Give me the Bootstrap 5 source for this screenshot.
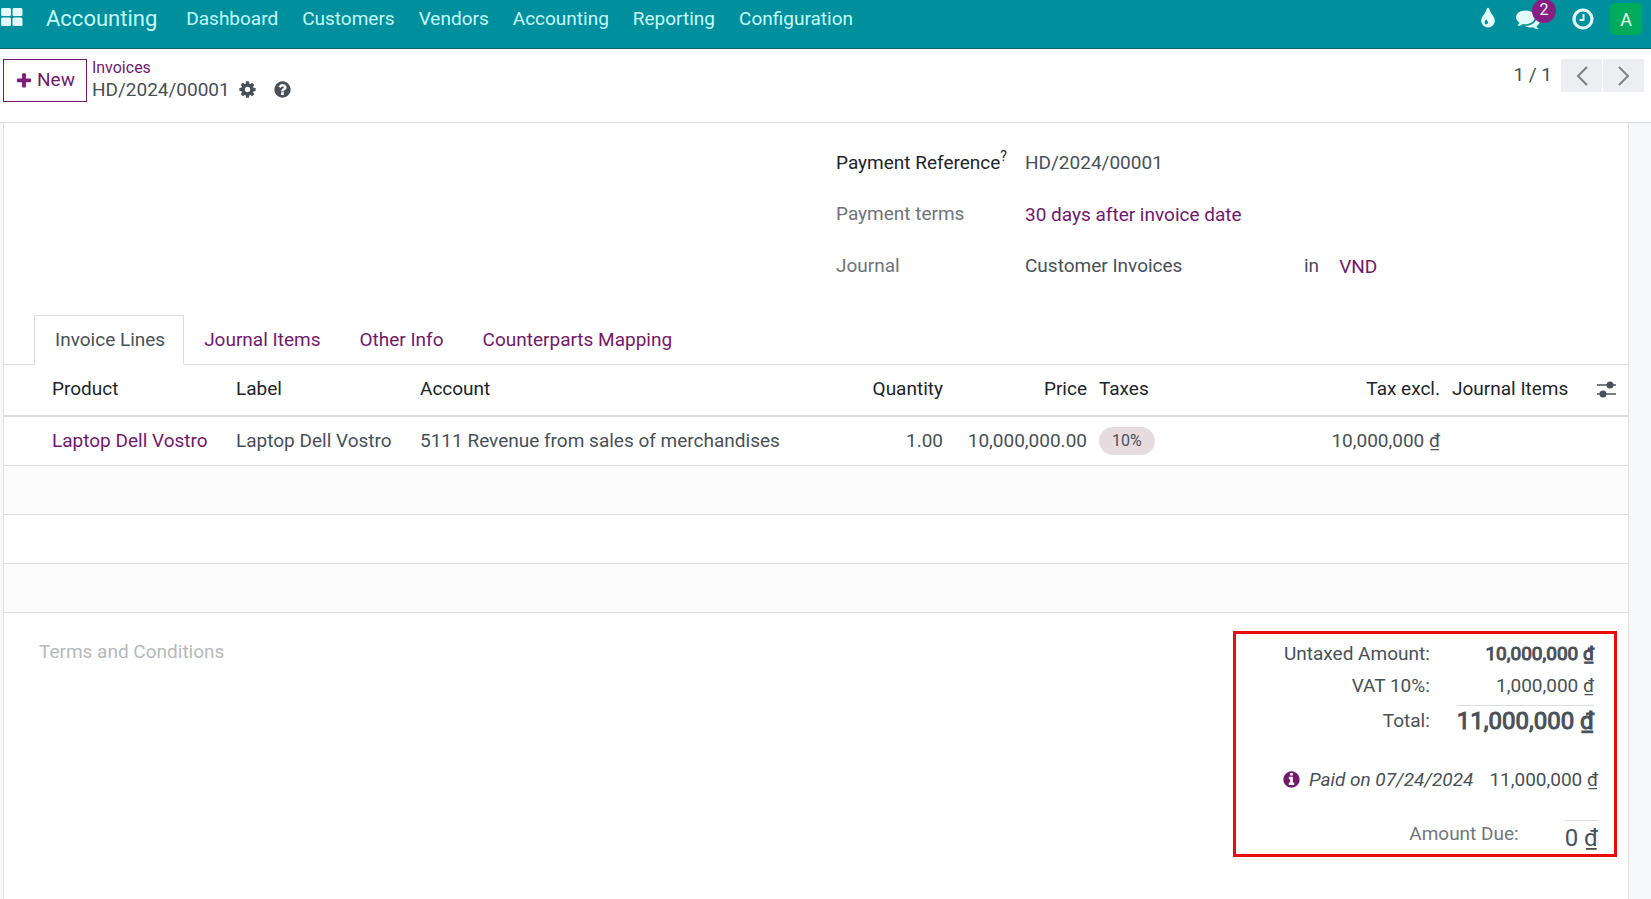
<!DOCTYPE html>
<html lang="en">
<head>
<meta charset="utf-8">
<meta name="viewport" content="width=device-width, initial-scale=1">
<title>HD/2024/00001 - Accounting</title>
<link rel="stylesheet" href="https://cdn.jsdelivr.net/npm/bootstrap@5.3.0/dist/css/bootstrap.min.css">
<style>
  :root { --ink: #495057; --heading: #212529; --accent: #71196b; --line: #dadde1; --teal: #00909d; }
  body { font-family: Roboto, sans-serif; font-size: 19px; line-height: 28px; color: var(--ink); background: #fff; }
  a { color: var(--accent); text-decoration: none; }
  svg { display: block; fill: currentColor; }

  .topbar { height: 49px; background: var(--teal); border-bottom: 1px solid #13616a; padding-right: 9px; }
  .topbar a, .topbar button { color: #c5fbfb; }
  .topbar svg { color: #e3fbfc; }
  .topbar .menu a { padding: 0 12px; line-height: 38px; }
  .topbar .app-title { font-size: 22px; line-height: 38px; padding: 0 17px 0 23px; }
  .tray { height: 38px; }
  .bare { border: 0; background: none; padding: 0; color: var(--ink); }
  .count { position: absolute; left: 16px; top: -8px; width: 24px; height: 24px; border-radius: 12px; background: #871e81; color: #e8f8fb; font-size: 16px; line-height: 22px; text-align: center; }
  .topbar .avatar { width: 32px; height: 32px; border-radius: 5px; background: #00ab5b; color: #e5fff2; font-size: 18px; line-height: 34px; }

  .control-panel { min-height: 73px; padding: 10px 7px 0 3px; }
  .btn-new { --bs-btn-color: var(--accent); --bs-btn-border-color: var(--accent); --bs-btn-border-radius: 0; --bs-btn-font-size: 19px; --bs-btn-padding-x: 11px; --bs-btn-padding-y: 6px; height: 43px; gap: 4px; }
  .btn-new svg { color: #801c7a; }
  .crumbs { line-height: 22px; margin-left: 5px; }
  .crumbs .parent { font-size: 16px; line-height: 18px; padding-bottom: 2px; }
  .crumbs button { padding-bottom: 2px; }
  .pager { gap: 1px; line-height: 31px; }
  .pager button { width: 41px; height: 33px; border: 0; background: #eceef1; color: #7d8287; display: grid; place-items: center; padding: 0; }

  .canvas { background: #f7f8fa; border-top: 1px solid var(--line); padding: 0 22px 0 3px; min-height: calc(100vh - 122px); }
  .sheet { background: #fff; border: solid var(--line); border-width: 0 1px; min-height: calc(100vh - 123px); }
  .fields { padding: 26px 20px 0; display: grid; grid-template-columns: 189px 1fr; row-gap: 23px; }
  .fields a { padding-top: 1px; }
  .fields label { color: #6f7479; }
  .fields label.strong-label { color: var(--heading); }
  .fields sup { font-size: 14px; top: -8px; }
  .journal-name { width: 279px; }

  .nav-tabs { --bs-nav-tabs-border-color: var(--line); --bs-nav-tabs-border-radius: 0; --bs-nav-tabs-link-active-color: var(--ink); --bs-nav-link-color: var(--accent); --bs-nav-tabs-link-active-border-color: var(--line) var(--line) #fff; padding-left: 30px; margin-top: 34px; }
  .nav-tabs .nav-link { padding: 10px 18px 10px 20px; line-height: 28px; margin-right: -1px; }

  .lines { table-layout: fixed; margin: 0; --bs-table-color: var(--ink); --bs-table-bg: transparent; border-color: var(--line); }
  .lines th, .lines td { padding: 9px 6px; line-height: 28px; height: 49px; white-space: nowrap; vertical-align: middle; }
  .lines th { font-weight: 400; color: var(--heading); height: 51px; padding-bottom: 11px; border-bottom-width: 2px; }
  .lines th:first-child, .lines td:first-child { padding-left: 48px; }
  .lines .filler td { background: #fcfcfc; }
  .lines th button { display: block; margin-left: 14px; }
  .tax-tag { display: inline-block; vertical-align: top; border-radius: 14px; background: #e6dcdf; font-size: 16px; line-height: 28px; padding: 0 13px; }

  .sheet-foot { padding: 18px 11px 0 35px; }
  .terms { border: 0; background: none; padding: 7px 0; resize: none; color: var(--ink); line-height: 28px; }
  .terms::placeholder { color: #b6b9bc; opacity: 1; }
  .totals { border: 3px solid #ea0b0b; width: 384px; height: 226px; padding: 4px 16px 0; white-space: nowrap; }
  .sums { display: grid; grid-template-columns: 1fr auto; column-gap: 27px; text-align: right; line-height: 32px; padding-right: 4px; }
  .heavy { -webkit-text-stroke: 1px currentColor; }
  .grand { font-size: 24px; line-height: 30px; border-top: 1px solid var(--line); margin-top: 3px; }
  .grand-label { margin-top: 3px; }
  .paid { margin-top: 27px; line-height: 32px; }
  .due { margin-top: 24px; gap: 46px; }
  .due .due-label { color: #73777b; }
  .due .due-value { font-size: 24px; line-height: 34px; border-top: 1px solid var(--line); }
</style>
</head>
<body>
<header class="topbar d-flex align-items-start">
  <a href="#" aria-label="Apps" class="mt-2"><svg width="23" height="18" viewBox="0 0 23 18"><rect x="1" y="0" width="10" height="8" rx="1.5"/><rect x="12.500" y="0" width="10" height="8" rx="1.500"/><rect x="1" y="9.500" width="10" height="8.500" rx="1.500"/><rect x="12.500" y="9.500" width="10" height="8.500" rx="1.500"/></svg></a>
  <a href="#" class="app-title">Accounting</a>
  <nav class="menu d-flex">
    <a href="#">Dashboard</a><a href="#">Customers</a><a href="#">Vendors</a><a href="#">Accounting</a><a href="#">Reporting</a><a href="#">Configuration</a>
  </nav>
  <div class="tray ms-auto d-flex align-items-center">
    <button class="bare me-3" aria-label="Theme"><svg width="24" height="24" viewBox="0 0 1792 1792"><path d="M896 1152q0-36-20-69-1-1-15.500-22.500t-25.500-38-25-44-21-50.500q-4-16-21-16t-21 16q-7 23-21 50.500t-25 44-25.500 38-15.500 22.500q-20 33-20 69 0 53 37.500 90.500t90.500 37.500 90.500-37.500 37.500-90.500zm512-128q0 212-150 362t-362 150-362-150-150-362q0-145 81-275 6-9 62.500-90.500t101-151 99.500-178 83-201.500q9-30 34-47t51-17 51.500 17 33.500 47q28 93 83 201.500t99.500 178 101 151 62.500 90.500q81 127 81 275z"/></svg></button>
    <button class="bare position-relative" aria-label="Messages"><svg width="24" height="24" viewBox="0 0 1792 1792"><path d="M1408 768q0 139-94 257t-256.500 186.500-353.500 68.500q-86 0-176-16-124 88-278 128-36 9-86 16h-3q-11 0-20.500-8t-11.500-21q-1-3-1-6.500t.5-6.500 2-6l2.500-5 3.500-5.500 4-5 4.500-5 4-4.500q5-6 23-25t26-29.500 22.500-29 25-38.500 20.500-44q-124-72-195-177t-71-224q0-139 94-257t256.500-186.500 353.500-68.500 353.500 68.500 256.500 186.500 94 257zm384 256q0 120-71 224.500t-195 176.500q10 24 20.500 44t25 38.500 22.500 29 26 29.500 23 25q1 1 4 4.500t4.500 5 4 5 3.500 5.500l2.500 5 2 6 .5 6.500-1 6.500q-3 14-13 22t-22 7q-50-7-86-16-154-40-278-128-90 16-176 16-271 0-472-132 58 4 88 4 161 0 309-45t264-129q125-92 192-212t67-254q0-77-23-152 129 71 204 178t75 230z"/></svg><span class="count">2</span></button>
    <button class="bare ms-4 ps-2 me-3" aria-label="Activities"><svg width="22" height="22" viewBox="0 0 22 22"><circle cx="11" cy="11" r="9" fill="none" stroke="currentColor" stroke-width="3.200"/><path d="M11.500 6v6H7.500" fill="none" stroke="currentColor" stroke-width="2"/></svg></button>
    <button class="bare avatar" aria-label="User menu">A</button>
  </div>
</header>

<div class="control-panel d-flex align-items-start">
  <button class="btn btn-new d-flex align-items-center"><svg width="18" height="18" viewBox="0 0 1792 1792"><path d="M1600 736v192q0 40-28 68t-68 28h-416v416q0 40-28 68t-68 28h-192q-40 0-68-28t-28-68v-416h-416q-40 0-68-28t-28-68v-192q0-40 28-68t68-28h416v-416q0-40 28-68t68-28h192q40 0 68 28t28 68v416h416q40 0 68 28t28 68z"/></svg>New</button>
  <div class="crumbs">
    <div class="parent"><a href="#">Invoices</a></div>
    <div class="d-flex align-items-center">
      <span>HD/2024/00001</span>
      <button class="bare ms-2" aria-label="Actions"><svg width="19" height="19" viewBox="0 0 1792 1792"><path d="M1152 896q0-106-75-181t-181-75-181 75-75 181 75 181 181 75 181-75 75-181zm512-109v222q0 12-8 23t-20 13l-185 28q-19 54-39 91 35 50 107 138 10 12 10 25t-9 23q-27 37-99 108t-94 71q-12 0-26-9l-138-108q-44 23-91 38-16 136-29 186-7 28-36 28h-222q-14 0-24.500-8.500t-11.500-21.500l-28-184q-49-16-90-37l-141 107q-10 9-25 9-14 0-25-11-126-114-165-168-7-10-7-23 0-12 8-23 15-21 51-66.500t54-70.500q-27-50-41-99l-183-27q-13-2-21-12.500t-8-23.500v-222q0-12 8-23t19-13l186-28q14-46 39-92-40-57-107-138-10-12-10-24 0-10 9-23 26-36 98.500-107.500t94.500-71.500q13 0 26 10l138 107q44-23 91-38 16-136 29-186 7-28 36-28h222q14 0 24.500 8.500t11.500 21.500l28 184q49 16 90 37l142-107q9-9 24-9 13 0 25 10 129 119 165 170 7 8 7 22 0 12-8 23-15 21-51 66.500t-54 70.500q26 50 41 98l183 28q13 2 21 12.500t8 23.500z"/></svg></button>
      <button class="bare ms-3" aria-label="Help"><svg width="19" height="19" viewBox="0 0 1792 1792"><path d="M1024 1376v-192q0-14-9-23t-23-9h-192q-14 0-23 9t-9 23v192q0 14 9 23t23 9h192q14 0 23-9t9-23zm256-672q0-88-55.500-163t-138.500-116-170-41q-243 0-371 213-15 24 8 42l132 100q7 6 19 6 16 0 25-12 53-68 86-92 34-24 86-24 48 0 85.500 26t37.500 59q0 38-20 61t-68 45q-63 28-115.500 86.500t-52.500 125.500v36q0 14 9 23t23 9h192q14 0 23-9t9-23q0-19 21.500-49.500t54.500-49.500q32-18 49-28.500t46-35 44.500-48 28-60.500 12.500-81zm384 192q0 209-103 385.500t-279.500 279.500-385.500 103-385.500-103-279.500-279.500-103-385.500 103-385.500 279.500-279.500 385.500-103 385.500 103 279.500 279.500 103 385.500z"/></svg></button>
    </div>
  </div>
  <div class="pager ms-auto d-flex align-items-start">
    <span class="me-2">1 / 1</span>
    <button aria-label="Previous"><svg width="12" height="20" viewBox="0 0 12 20"><path d="M11 1 2 10l9 9" fill="none" stroke="currentColor" stroke-width="2"/></svg></button>
    <button aria-label="Next"><svg width="12" height="20" viewBox="0 0 12 20"><path d="m1 1 9 9-9 9" fill="none" stroke="currentColor" stroke-width="2"/></svg></button>
  </div>
</div>

<main class="canvas">
  <div class="sheet">
    <div class="row g-0">
      <div class="col-6 offset-6">
        <div class="fields">
          <label class="strong-label">Payment Reference<sup>?</sup></label><span>HD/2024/00001</span>
          <label>Payment terms</label><a href="#">30 days after invoice date</a>
          <label>Journal</label><div class="d-flex"><span class="journal-name">Customer Invoices</span><span>in</span><a href="#" class="ms-3 ps-1">VND</a></div>
        </div>
      </div>
    </div>

    <ul class="nav nav-tabs">
      <li class="nav-item"><a class="nav-link active" href="#">Invoice Lines</a></li>
      <li class="nav-item"><a class="nav-link" href="#">Journal Items</a></li>
      <li class="nav-item"><a class="nav-link" href="#">Other Info</a></li>
      <li class="nav-item"><a class="nav-link" href="#">Counterparts Mapping</a></li>
    </ul>

    <table class="table lines">
      <colgroup><col style="width:226px"><col style="width:184px"><col><col style="width:100px"><col style="width:144px"><col style="width:201px"><col style="width:152px"><col style="width:131px"><col style="width:51px"></colgroup>
      <thead>
        <tr><th>Product</th><th>Label</th><th>Account</th><th class="text-end">Quantity</th><th class="text-end">Price</th><th>Taxes</th><th class="text-end">Tax excl.</th><th>Journal Items</th>
          <th><button class="bare" aria-label="Optional columns"><svg width="19" height="17" viewBox="0 0 19 17"><path d="M0 4h19M0 13h19" stroke="currentColor" stroke-width="1.600"/><circle cx="13" cy="4" r="3.500"/><circle cx="6" cy="13" r="3.500"/></svg></button></th></tr>
      </thead>
      <tbody>
        <tr><td><a href="#">Laptop Dell Vostro</a></td><td>Laptop Dell Vostro</td><td>5111 Revenue from sales of merchandises</td><td class="text-end">1.00</td><td class="text-end">10,000,000.00</td><td><span class="tax-tag">10%</span></td><td class="text-end">10,000,000 ₫</td><td></td><td></td></tr>
        <tr class="filler"><td colspan="9"></td></tr>
        <tr><td colspan="9"></td></tr>
        <tr class="filler"><td colspan="9"></td></tr>
      </tbody>
    </table>

    <div class="sheet-foot d-flex justify-content-between align-items-start">
      <textarea class="terms" rows="2" placeholder="Terms and Conditions" aria-label="Terms and Conditions"></textarea>
      <div class="totals">
        <div class="sums">
          <span>Untaxed Amount:</span><span class="heavy">10,000,000 ₫</span>
          <span>VAT 10%:</span><span>1,000,000 ₫</span>
          <span class="grand-label">Total:</span><span class="grand heavy">11,000,000 ₫</span>
        </div>
        <div class="paid d-flex align-items-center justify-content-end">
          <a href="#" aria-label="Payment details"><svg width="19" height="19" viewBox="0 0 1792 1792"><path d="M1152 1376v-160q0-14-9-23t-23-9h-96v-512q0-14-9-23t-23-9h-320q-14 0-23 9t-9 23v160q0 14 9 23t23 9h96v320h-96q-14 0-23 9t-9 23v160q0 14 9 23t23 9h448q14 0 23-9t9-23zm-128-896v-160q0-14-9-23t-23-9h-192q-14 0-23 9t-9 23v160q0 14 9 23t23 9h192q14 0 23-9t9-23zm640 416q0 209-103 385.500t-279.500 279.500-385.500 103-385.500-103-279.500-279.500-103-385.500 103-385.500 279.500-279.500 385.500-103 385.500 103 279.500 279.500 103 385.500z"/></svg></a>
          <i class="ms-2">Paid on 07/24/2024</i><span class="ms-3">11,000,000 ₫</span>
        </div>
        <div class="due d-flex justify-content-end">
          <span class="due-label">Amount Due:</span><span class="due-value">0 ₫</span>
        </div>
      </div>
    </div>
  </div>
</main>
<script src="https://cdn.jsdelivr.net/npm/bootstrap@5.3.0/dist/js/bootstrap.bundle.min.js"></script>
</body>
</html>
